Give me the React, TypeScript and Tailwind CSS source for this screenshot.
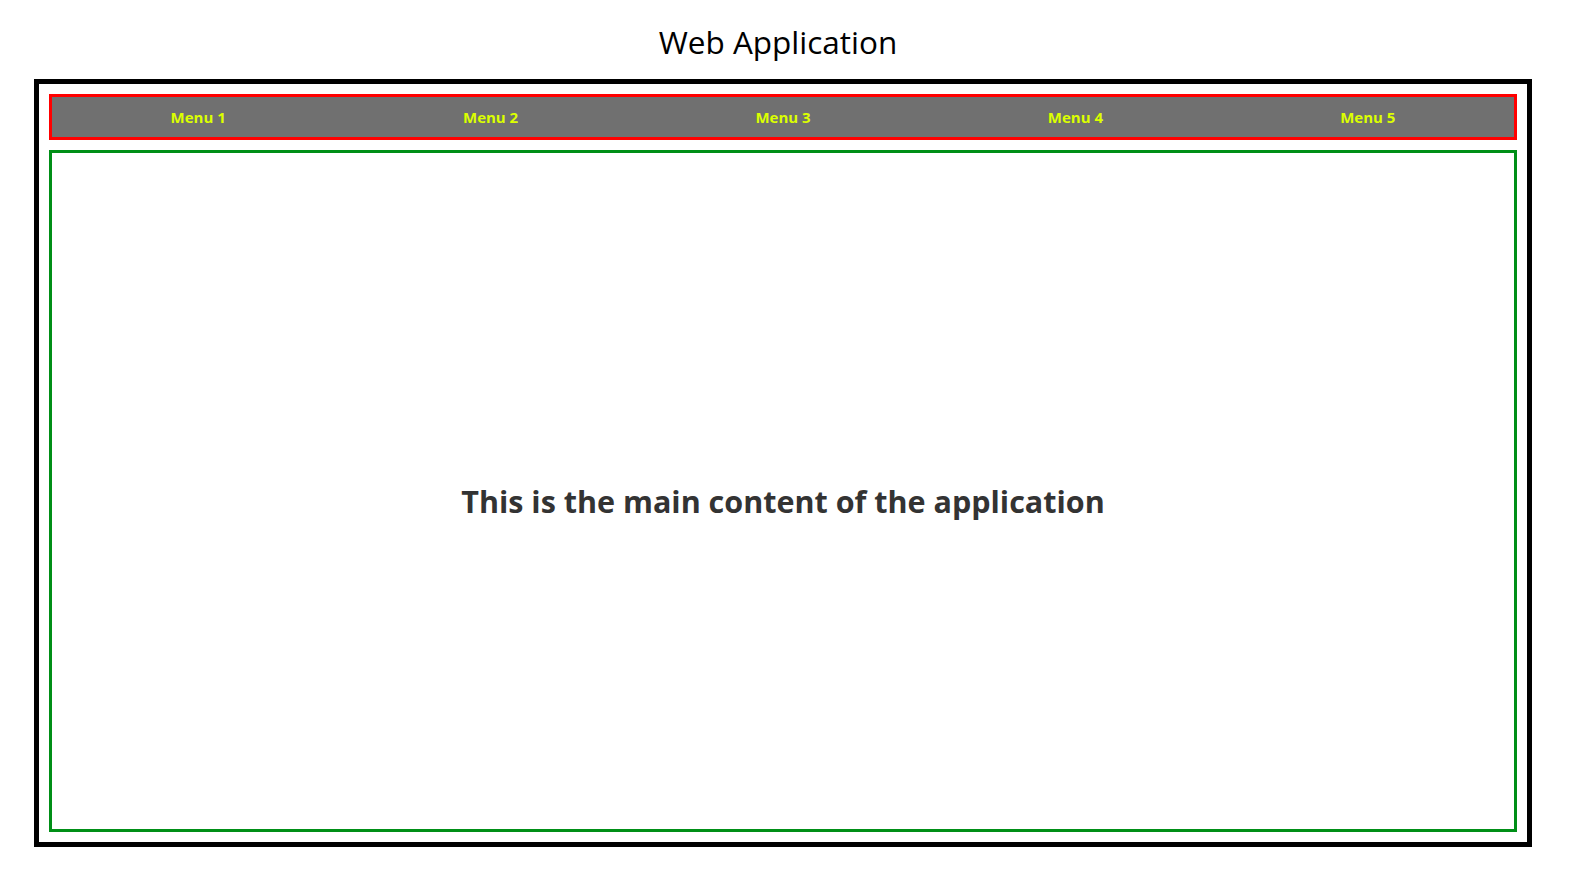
import React from 'react';

const menus = ['Menu 1', 'Menu 2', 'Menu 3', 'Menu 4', 'Menu 5'];

const App: React.FC = () => {
  return (
    <div className="min-h-screen bg-white font-['Open_Sans',sans-serif]">
      <div className="h-[79px] w-[1556px] pt-[22px] text-center">
        <h1 className="text-[31.5px] leading-[40px] font-normal text-black">Web Application</h1>
      </div>

      <div className="ml-[34px] flex h-[768px] w-[1498px] flex-col gap-[10px] border-[5px] border-black p-[10px]">
        <nav className="flex h-[46px] border-[3px] border-[#ff0000] bg-[#707070]">
          {menus.map((m) => (
            <div key={m} className="flex flex-1 items-center justify-center text-[15px] font-bold text-[#dcff00]">
              {m}
            </div>
          ))}
        </nav>

        <main className="flex flex-1 items-center justify-center border-[3px] border-[#008f17] pt-[22px]">
          <h2 className="text-[30.5px] font-bold text-[#333333]">This is the main content of the application</h2>
        </main>
      </div>
    </div>
  );
};

export default App;
